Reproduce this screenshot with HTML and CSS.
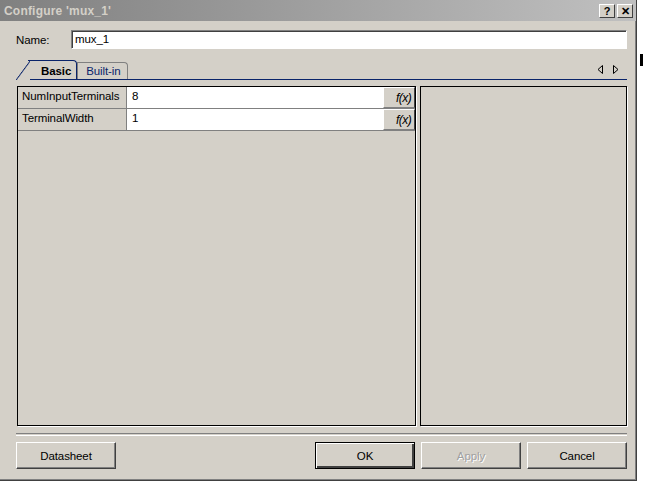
FILE: index.html
```html
<!DOCTYPE html>
<html lang="en">
<head>
    <meta charset="UTF-8">
    <title>Configure 'mux_1'</title>
    <link rel="stylesheet" href="styles.css">
</head>
<body>
    <div class="window">
        <div class="titlebar">
            <span class="title">Configure 'mux_1'</span>
            <div class="caption-buttons">
                <span class="cap-btn">?</span>
                <span class="cap-btn">&#x2715;</span>
            </div>
        </div>

        <div class="content">
            <div class="name-row">
                <label class="name-label">Name:</label>
                <div class="name-input">mux_1</div>
            </div>

            <div class="tabstrip">
                <div class="tab active">Basic</div>
                <div class="tab">Built-in</div>
                <div class="tab-arrows">
                    <svg width="7" height="9" viewBox="0 0 7 9"><path d="M5.5 0.5 L1 4.5 L5.5 8.5 Z" fill="none" stroke="#000"/></svg>
                    <svg width="7" height="9" viewBox="0 0 7 9"><path d="M1.5 0.5 L6 4.5 L1.5 8.5 Z" fill="none" stroke="#000"/></svg>
                </div>
            </div>

            <div class="panels">
                <div class="grid-panel">
                    <div class="param-row">
                        <div class="param-name">NumInputTerminals</div>
                        <div class="param-value">8</div>
                        <div class="fx-btn">f(x)</div>
                    </div>
                    <div class="param-row">
                        <div class="param-name">TerminalWidth</div>
                        <div class="param-value">1</div>
                        <div class="fx-btn">f(x)</div>
                    </div>
                </div>
                <div class="desc-panel"></div>
            </div>

            <div class="separator"></div>

            <div class="button-row">
                <div class="btn">Datasheet</div>
                <div class="spacer"></div>
                <div class="btn default">OK</div>
                <div class="btn disabled">Apply</div>
                <div class="btn">Cancel</div>
            </div>
        </div>
    </div>
    <div class="cursor-mark"></div>
</body>
</html>
```

FILE: styles.css
```css
body {
    margin: 0;
    background-color: #fff;
    font-family: 'Liberation Sans', Arial, sans-serif;
    font-size: 12px;
    color: #000;
    width: 645px;
    height: 485px;
    overflow: hidden;
    position: relative;
}

.window {
    width: 637px;
    height: 481px;
    box-sizing: border-box;
    background-color: #d4d0c8;
    border-right: 1px solid #404040;
    border-bottom: 1px solid #404040;
    box-shadow: inset -1px -1px 0 #808080;
    display: flex;
    flex-direction: column;
}

.titlebar {
    height: 21px;
    background: linear-gradient(to right, #808080, #c0c0c0);
    display: flex;
    align-items: center;
    justify-content: space-between;
    padding: 0 3px 0 4px;
}

.title {
    color: #d4d0c8;
    font-weight: bold;
    font-size: 12px;
    letter-spacing: 0.2px;
}

.caption-buttons {
    display: flex;
    gap: 2px;
}

.cap-btn {
    width: 16px;
    height: 14px;
    box-sizing: border-box;
    background-color: #d4d0c8;
    border-top: 1px solid #fff;
    border-left: 1px solid #fff;
    border-right: 1px solid #404040;
    border-bottom: 1px solid #404040;
    font-weight: bold;
    font-size: 11px;
    line-height: 12px;
    text-align: center;
}

.content {
    flex: 1;
    display: flex;
    flex-direction: column;
    padding: 9px 9px 0 16px;
    font-size: 11.5px;
    letter-spacing: -0.1px;
}

.name-row {
    display: flex;
    align-items: center;
    height: 19px;
}

.name-label {
    width: 55px;
}

.name-input {
    flex: 1;
    height: 19px;
    box-sizing: border-box;
    background-color: #fff;
    border-top: 1px solid #808080;
    border-left: 1px solid #808080;
    border-right: 1px solid #fff;
    border-bottom: 1px solid #fff;
    box-shadow: inset 1px 1px 0 #404040;
    padding: 1px 0 0 3px;
    line-height: 15px;
}

.tabstrip {
    margin-top: 11px;
    height: 19px;
    display: flex;
    align-items: flex-end;
    border-bottom: 1px solid #0a246a;
    position: relative;
}

.tab {
    height: 17px;
    box-sizing: border-box;
    padding: 2px 6px 0 8px;
    border: 1px solid #808080;
    border-bottom: none;
    border-radius: 0 4px 0 0;
    color: #0a246a;
}

.tab.active {
    margin-left: 12px;
    height: 19px;
    padding: 4px 5px 0 13px;
    font-weight: bold;
    color: #000;
    border-color: #0a246a;
    border-left: none;
    position: relative;
}

.tab.active::before {
    content: "";
    position: absolute;
    left: -12px;
    top: 0;
    width: 14px;
    height: 19px;
    background: linear-gradient(to bottom right, transparent 47%, #0a246a 50%, #d4d0c8 55%);
}

.tab-arrows {
    margin-left: auto;
    margin-right: 8px;
    margin-bottom: 5px;
    display: flex;
    gap: 8px;
}

.panels {
    margin-top: 6px;
    display: flex;
    gap: 4px;
    height: 340px;
    padding-left: 1px;
}

.grid-panel {
    width: 400px;
    box-sizing: border-box;
    border: 1px solid #000;
    box-shadow: 1px 1px 0 #fff;
    display: flex;
    flex-direction: column;
}

.desc-panel {
    width: 207px;
    box-sizing: border-box;
    border: 1px solid #000;
    box-shadow: 1px 1px 0 #fff;
}

.param-row {
    display: flex;
    height: 21px;
    border-bottom: 1px solid #808080;
}

.param-name {
    width: 109px;
    box-sizing: border-box;
    padding: 3px 0 0 4px;
    border-right: 1px solid #808080;
    white-space: nowrap;
    overflow: hidden;
}

.param-value {
    flex: 1;
    background-color: #fff;
    padding: 3px 0 0 5px;
}

.fx-btn {
    width: 32px;
    box-sizing: border-box;
    border-top: 1px solid #fff;
    border-left: 1px solid #fff;
    border-right: 1px solid #404040;
    border-bottom: 1px solid #808080;
    font-style: italic;
    font-size: 12px;
    text-align: right;
    padding: 3px 3px 0 0;
    letter-spacing: -0.5px;
}

.separator {
    margin-top: 7px;
    height: 1px;
    border-top: 1px solid #808080;
    border-bottom: 1px solid #fff;
}

.button-row {
    margin-top: 6px;
    display: flex;
    gap: 6px;
}

.spacer {
    flex: 1;
}

.btn {
    width: 100px;
    height: 27px;
    box-sizing: border-box;
    border-top: 1px solid #fff;
    border-left: 1px solid #fff;
    border-right: 1px solid #404040;
    border-bottom: 1px solid #404040;
    box-shadow: inset -1px -1px 0 #808080;
    display: flex;
    align-items: center;
    justify-content: center;
}

.btn.default {
    border: 1px solid #000;
    box-shadow: inset 1px 1px 0 #fff, inset -2px -2px 0 #404040, inset -1px -1px 0 #808080;
}

.btn.disabled {
    color: #a0a0a0;
    text-shadow: 1px 1px 0 #fff;
}

.cursor-mark {
    position: absolute;
    left: 640px;
    top: 54px;
    width: 3px;
    height: 12px;
    background-color: #000;
}
```
